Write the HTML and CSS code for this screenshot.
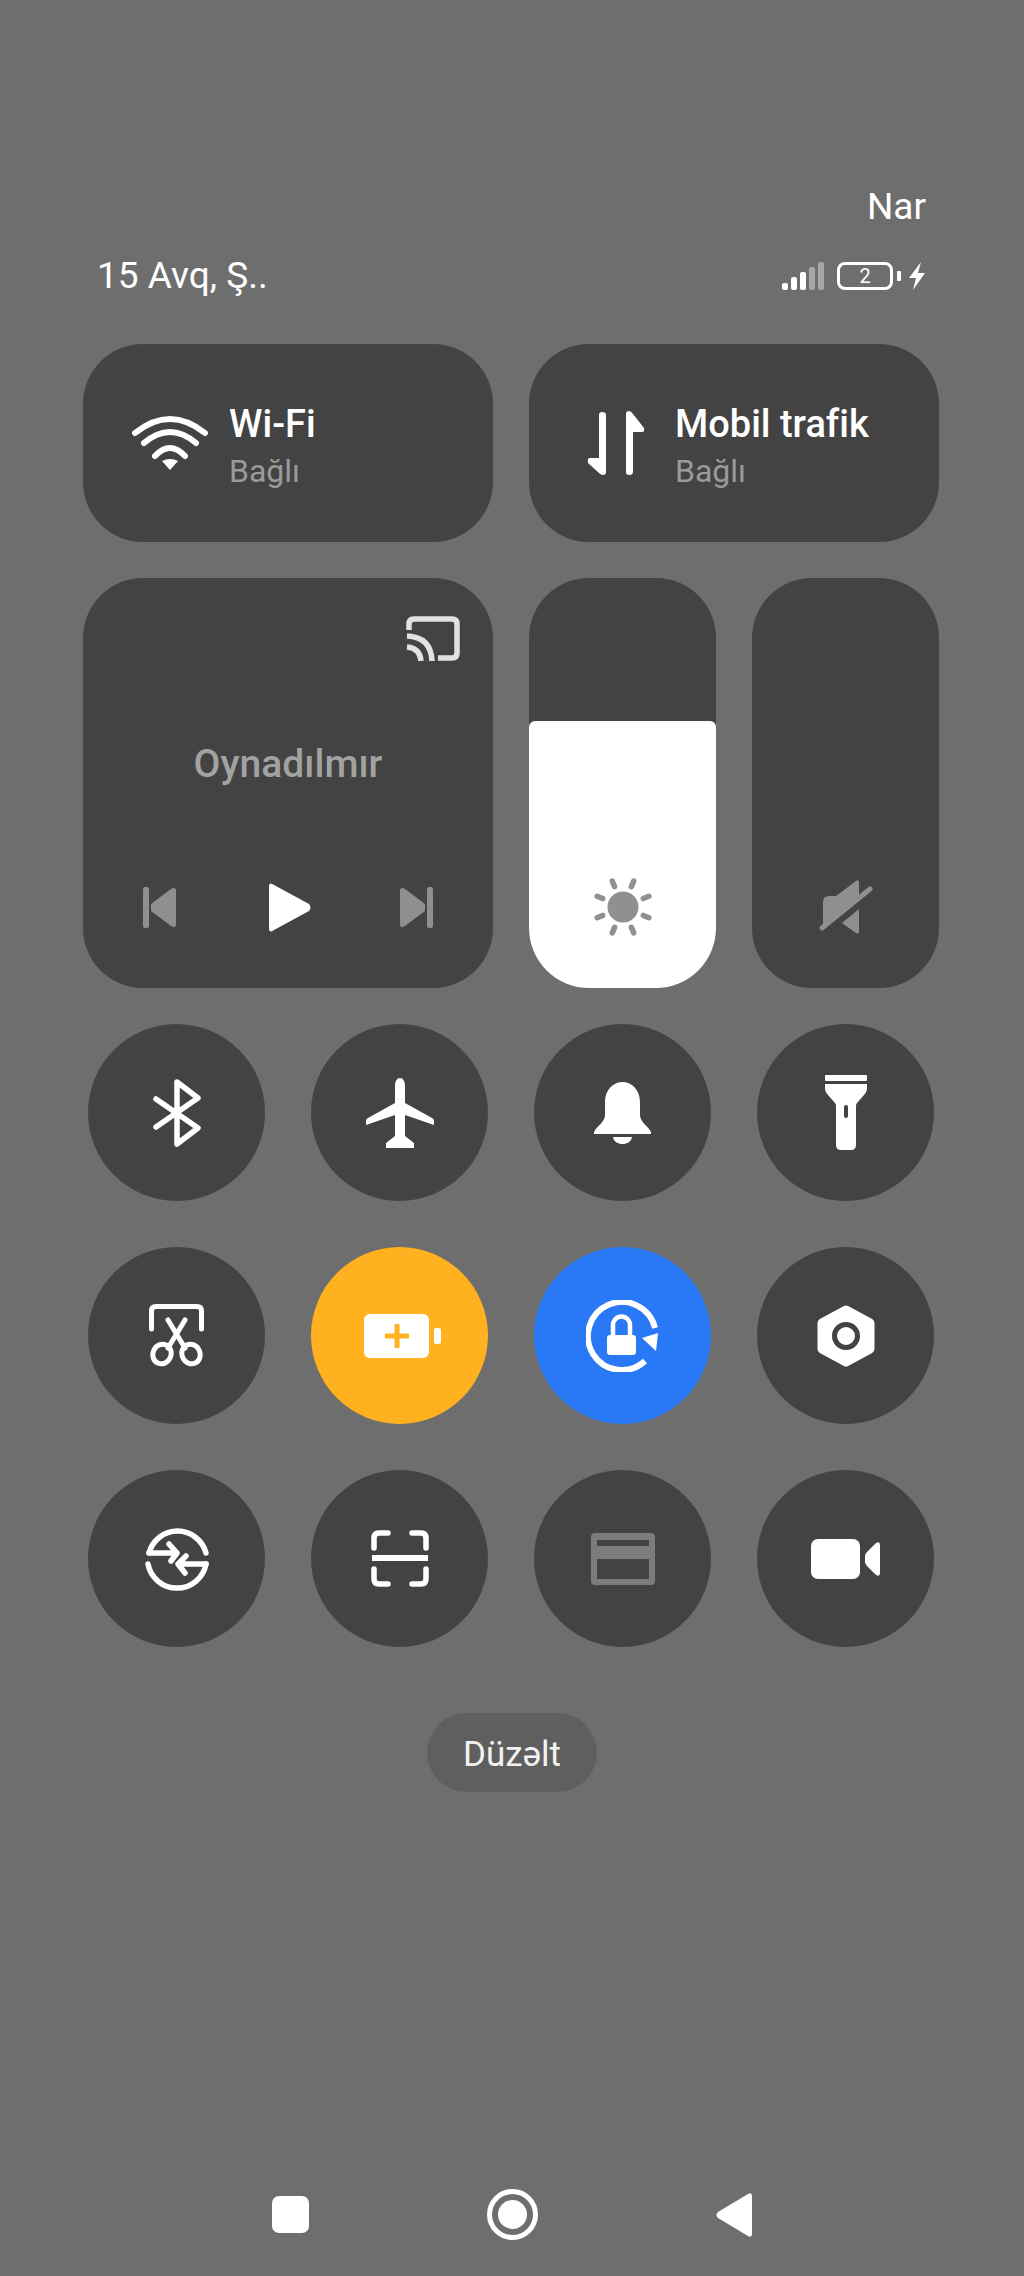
FILE: index.html
```html
<!DOCTYPE html>
<html lang="az">
<head>
<meta charset="UTF-8">
<meta name="viewport" content="width=device-width, initial-scale=1.0">
<title>Control centre</title>
<link rel="stylesheet" href="styles.css">
</head>
<body>
<div class="control-center">
    <div class="carrier">Nar</div>
    <header class="status-row">
        <span class="status-date">15 Avq, Ş..</span>
        <div class="status-icons">
            <svg width="42" height="28" viewBox="0 0 42 28">
                <rect x="0" y="21" width="6" height="7" rx="2" fill="#fff"/>
                <rect x="9" y="15" width="6" height="13" rx="2" fill="#fff"/>
                <rect x="18" y="10" width="6" height="18" rx="2" fill="#fff"/>
                <rect x="27" y="5" width="6" height="23" rx="2" fill="#a6a6a6"/>
                <rect x="36" y="0" width="6" height="28" rx="2" fill="#a6a6a6"/>
            </svg>
            <div class="battery"><span class="battery-level">2</span></div>
            <span class="battery-tip"></span>
            <svg class="bolt" width="18" height="28" viewBox="0 0 18 28">
                <path d="M13 0 L1 16 H8 L5 28 L17 11 H10 Z" fill="#fff"/>
            </svg>
        </div>
    </header>

    <section class="tile-row">
        <div class="tile tile-wide">
            <div class="tile-icon">
                <svg width="76" height="56" viewBox="0 0 76 56" fill="none" stroke="#fff" stroke-width="6" stroke-linecap="round">
                    <path d="M3 18 Q38 -10 73 18"/>
                    <path d="M12 28 Q38 6 64 28"/>
                    <path d="M23 41 Q38 25 53 41"/>
                    <path d="M30 46 Q38 42 46 46 L38 55 Z" fill="#fff" stroke="none"/>
                </svg>
            </div>
            <div class="tile-text">
                <div class="tile-title">Wi-Fi</div>
                <div class="tile-sub">Bağlı</div>
            </div>
        </div>
        <div class="tile tile-wide">
            <div class="tile-icon">
                <svg width="58" height="64" viewBox="0 0 58 64" fill="#fff">
                    <path d="M12 4 Q12 1 15 1 Q19 1 19 4 V61 Q19 64 16 64 Q14 64 12 62 L1 52 Q0 47 3 47 H12 Z"/>
                    <path d="M39 61 Q39 64 42 64 Q46 64 46 61 V21 H55 Q58 21 57 17 L46 3 Q44 0 42 0 Q39 0 39 3 Z"/>
                </svg>
            </div>
            <div class="tile-text">
                <div class="tile-title">Mobil trafik</div>
                <div class="tile-sub">Bağlı</div>
            </div>
        </div>
    </section>

    <section class="media-row">
        <div class="tile media-tile">
            <svg class="cast-icon" width="54" height="45" viewBox="0 0 54 45" fill="none" stroke="#e2e2e2" stroke-width="5.500">
                <path d="M3 14 V8 Q3 3 8 3 H46 Q51 3 51 8 V37 Q51 42 46 42 H32"/>
                <path d="M1 20 Q25 21 26 45"/>
                <path d="M1 31 Q14 32 15 45"/>
            </svg>
            <div class="media-title">Oynadılmır</div>
            <div class="media-controls">
                <svg width="33" height="41" viewBox="0 0 33 41" fill="#8f8f8f">
                    <rect x="0" y="0" width="6" height="41" rx="2"/>
                    <path d="M8 17 L28 2 Q33 -1 33 4 V37 Q33 42 28 39 L8 24 Z"/>
                </svg>
                <svg class="play-icon" width="42" height="49" viewBox="0 0 42 49" fill="#fff">
                    <path d="M0 4 Q0 -2 5 2 L40 21 Q43 24.500 40 28 L5 47 Q0 51 0 45 Z"/>
                </svg>
                <svg width="33" height="41" viewBox="0 0 33 41" fill="#8f8f8f">
                    <rect x="27" y="0" width="6" height="41" rx="2"/>
                    <path d="M25 17 L5 2 Q0 -1 0 4 V37 Q0 42 5 39 L25 24 Z"/>
                </svg>
            </div>
        </div>
        <div class="tile slider-tile">
            <div class="slider-fill">
                <svg width="60" height="60" viewBox="0 0 60 60" fill="#909090" stroke="#909090" stroke-width="5.500" stroke-linecap="round">
                    <circle cx="30" cy="30" r="15.500" stroke="none"/>
                    <line x1="30" y1="2" x2="30" y2="8" transform="rotate(22.500 30 30)"/>
                    <line x1="30" y1="2" x2="30" y2="8" transform="rotate(67.500 30 30)"/>
                    <line x1="30" y1="2" x2="30" y2="8" transform="rotate(112.500 30 30)"/>
                    <line x1="30" y1="2" x2="30" y2="8" transform="rotate(157.500 30 30)"/>
                    <line x1="30" y1="2" x2="30" y2="8" transform="rotate(202.500 30 30)"/>
                    <line x1="30" y1="2" x2="30" y2="8" transform="rotate(247.500 30 30)"/>
                    <line x1="30" y1="2" x2="30" y2="8" transform="rotate(292.500 30 30)"/>
                    <line x1="30" y1="2" x2="30" y2="8" transform="rotate(337.500 30 30)"/>
                </svg>
            </div>
        </div>
        <div class="tile slider-tile slider-empty">
            <svg width="54" height="54" viewBox="0 0 54 54" fill="#8f8f8f">
                <path d="M4 22 Q4 16 10 16 H17 L37 1 Q40 -1 40 3 V18 L4 47 Z"/>
                <path d="M23 43 L40 29 V52 Q39 55 37 53 Z"/>
                <line x1="3" y1="48" x2="51" y2="9" stroke="#8f8f8f" stroke-width="5" stroke-linecap="round"/>
            </svg>
        </div>
    </section>

    <section class="toggle-grid">
        <div class="toggle">
            <svg width="48" height="68" viewBox="0 0 48 68" fill="none" stroke="#fff" stroke-width="5.500" stroke-linecap="round" stroke-linejoin="round">
                <path d="M3 20 L45 49 L24 65 V3 L45 19 L3 48"/>
            </svg>
        </div>
        <div class="toggle">
            <svg width="68" height="70" viewBox="0 0 68 70" fill="#fff">
                <path d="M34 0 C37 0 39 3 39 8 V25 L66 40 Q68 41 68 43 V47 L39 37 V58 L48 65 V70 H20 V65 L29 58 V37 L0 47 V43 Q0 41 2 40 L29 25 V8 C29 3 31 0 34 0 Z"/>
            </svg>
        </div>
        <div class="toggle">
            <svg width="57" height="62" viewBox="0 0 57 62" fill="#fff">
                <path d="M28.500 0 C38 0 46 8 46 20 V33 C46 40 54 44 57 50 V52 H0 V50 C3 44 11 40 11 33 V20 C11 8 19 0 28.500 0 Z"/>
                <path d="M19 55 H38 C37 60 33 62 28.500 62 C24 62 20 60 19 55 Z"/>
            </svg>
        </div>
        <div class="toggle">
            <svg width="42" height="75" viewBox="0 0 42 75" fill="#fff">
                <rect x="0" y="0" width="42" height="6" rx="1"/>
                <path d="M0 9 H42 V14 Q42 17 39 20 L32 28 Q31 29 31 31 V70 Q31 75 26 75 H16 Q11 75 11 70 V31 Q11 29 10 28 L3 20 Q0 17 0 14 Z"/>
                <rect x="19" y="30" width="4" height="13" rx="2" fill="#434343"/>
            </svg>
        </div>

        <div class="toggle">
            <svg width="55" height="63" viewBox="0 0 55 63" fill="none" stroke="#fff" stroke-width="5" stroke-linecap="round">
                <path d="M2.500 25 V7 Q2.500 2.500 7 2.500 H48 Q52.500 2.500 52.500 7 V25"/>
                <path d="M19 16 L36 44"/>
                <path d="M36 16 L19 44"/>
                <ellipse cx="13" cy="50" rx="9" ry="10" transform="rotate(25 13 50)"/>
                <ellipse cx="42" cy="50" rx="9" ry="10" transform="rotate(-25 42 50)"/>
            </svg>
        </div>
        <div class="toggle toggle-saver">
            <svg class="saver-icon" width="77" height="44" viewBox="0 0 77 44">
                <rect x="0" y="0" width="65" height="44" rx="6" fill="#fff"/>
                <rect x="70" y="14" width="7" height="16" rx="2" fill="#fff"/>
                <path d="M33 10 V34 M21 22 H45" stroke="#ffb120" stroke-width="5"/>
            </svg>
        </div>
        <div class="toggle toggle-rotate">
            <svg width="73" height="72" viewBox="0 0 73 72" fill="none">
                <path d="M59 61 A34 34 0 1 1 69 28" stroke="#fff" stroke-width="6"/>
                <path d="M56 38 L72 33 L70 51 Z" fill="#fff"/>
                <path d="M27 35 V25 A8.500 8.500 0 0 1 44 25 V35" stroke="#fff" stroke-width="4.500"/>
                <rect x="21" y="35" width="29" height="20" rx="3" fill="#fff"/>
            </svg>
        </div>
        <div class="toggle">
            <svg width="58" height="62" viewBox="0 0 58 62">
                <path d="M29 5 L53 18 V44 L29 57 L5 44 V18 Z" fill="#fff" stroke="#fff" stroke-width="9" stroke-linejoin="round"/>
                <circle cx="29" cy="31" r="11.500" fill="#fff" stroke="#434343" stroke-width="5"/>
            </svg>
        </div>

        <div class="toggle">
            <svg width="64" height="65" viewBox="0 0 64 65" fill="none" stroke="#fff" stroke-width="5.500" stroke-linecap="round" stroke-linejoin="round">
                <path d="M4 27 A29.500 29.500 0 0 1 61 27"/>
                <path d="M3 38 A29.500 29.500 0 0 0 61 38"/>
                <path d="M4 27 H32 M24 18 L32 27 L26 35"/>
                <path d="M61 38 H33 M41 30 L33 38 L40 47"/>
            </svg>
        </div>
        <div class="toggle">
            <svg width="58" height="57" viewBox="0 0 58 57" fill="none" stroke="#fff" stroke-width="5.500" stroke-linecap="round">
                <path d="M3 18 V8 Q3 3 8 3 H17"/>
                <path d="M41 3 H50 Q55 3 55 8 V18"/>
                <path d="M3 39 V49 Q3 54 8 54 H17"/>
                <path d="M41 54 H50 Q55 54 55 49 V39"/>
                <path d="M1 28 H57" stroke-width="6" stroke-linecap="butt"/>
            </svg>
        </div>
        <div class="toggle">
            <svg width="64" height="52" viewBox="0 0 64 52">
                <rect x="0" y="0" width="64" height="52" rx="4" fill="#7c7c7c"/>
                <rect x="6" y="7" width="52" height="6" fill="#434343"/>
                <rect x="6" y="26" width="52" height="20" fill="#434343"/>
            </svg>
        </div>
        <div class="toggle">
            <svg width="69" height="40" viewBox="0 0 69 40" fill="#fff">
                <rect x="0" y="0" width="49" height="40" rx="7"/>
                <path d="M54 17 Q54 15 56 13 L65 4 Q69 2 69 6 V34 Q69 38 65 36 L56 27 Q54 25 54 23 Z"/>
            </svg>
        </div>
    </section>

    <div class="edit-wrap">
        <button class="edit-btn">Düzəlt</button>
    </div>

    <nav class="nav-bar">
        <span class="nav-square"></span>
        <span class="nav-home"><span class="nav-home-dot"></span></span>
        <svg width="36" height="44" viewBox="0 0 36 44" fill="#fff">
            <path d="M32 1 Q36 -1 36 3 V41 Q36 45 32 43 L2 25 Q-1 22 2 19 Z"/>
        </svg>
    </nav>
</div>
</body>
</html>
```

FILE: styles.css
```css
:root {
    --background-color: #6e6e6e;
    --tile-color: #434343;
    --muted-color: #9a9a9a;
}
* {
    box-sizing: border-box;
}
body {
    margin: 0;
    padding: 0;
    background-color: var(--background-color);
    color: #fff;
    font-family: Roboto, sans-serif;
}
.control-center {
    width: 1024px;
    height: 2276px;
    padding-top: 186px;
    overflow: hidden;
}
.carrier {
    padding-right: 98px;
    font-size: 37px;
    line-height: 42px;
    text-align: right;
}
.status-row {
    display: flex;
    justify-content: space-between;
    align-items: center;
    height: 42px;
    margin-top: 27px;
    padding: 0 98px 0 97px;
}
.status-date {
    font-size: 37px;
    line-height: 42px;
}
.status-icons {
    display: flex;
    align-items: center;
}
.battery {
    display: flex;
    justify-content: center;
    align-items: center;
    width: 56px;
    height: 28px;
    margin-left: 13px;
    border: 3px solid #fff;
    border-radius: 8px;
}
.battery-level {
    font-size: 20px;
    line-height: 22px;
}
.battery-tip {
    width: 4px;
    height: 10px;
    margin-left: 4px;
    background-color: #fff;
    border-radius: 1px;
}
.bolt {
    margin-left: 7px;
}
.tile {
    background-color: var(--tile-color);
    border-radius: 60px;
}
.tile-row {
    display: grid;
    grid-template-columns: 410px 410px;
    gap: 36px;
    margin-top: 47px;
    padding-left: 83px;
}
.tile-wide {
    display: flex;
    align-items: center;
    height: 198px;
    padding-left: 27px;
}
.tile-icon {
    display: flex;
    justify-content: center;
    width: 119px;
}
.tile-text {
    padding-top: 6px;
}
.tile-title {
    font-size: 38px;
    font-weight: 500;
    line-height: 46px;
}
.tile-sub {
    margin-top: 4px;
    color: var(--muted-color);
    font-size: 32px;
    line-height: 40px;
}
.media-row {
    display: grid;
    grid-template-columns: 410px 187px 187px;
    gap: 36px;
    height: 410px;
    margin-top: 36px;
    padding-left: 83px;
}
.media-tile {
    display: flex;
    flex-direction: column;
    padding: 38px 33px 0 60px;
}
.cast-icon {
    align-self: flex-end;
}
.media-title {
    margin-top: 80px;
    margin-left: -27px;
    color: #a2a2a2;
    font-size: 39px;
    font-weight: 500;
    line-height: 46px;
    text-align: center;
}
.media-controls {
    display: flex;
    justify-content: space-between;
    align-items: center;
    height: 49px;
    margin-top: 96px;
    margin-right: 27px;
}
.play-icon {
    margin-left: 4px;
}
.slider-tile {
    display: flex;
    flex-direction: column;
    justify-content: flex-end;
    overflow: hidden;
}
.slider-fill {
    display: flex;
    justify-content: center;
    align-items: flex-end;
    height: 267px;
    padding-bottom: 51px;
    background-color: #fff;
    border-radius: 6px 6px 0 0;
}
.slider-empty {
    align-items: center;
    padding-bottom: 54px;
}
.toggle-grid {
    display: grid;
    grid-template-columns: repeat(4, 177px);
    grid-auto-rows: 177px;
    gap: 46px;
    margin-top: 36px;
    padding-left: 88px;
}
.toggle {
    display: flex;
    justify-content: center;
    align-items: center;
    background-color: var(--tile-color);
    border-radius: 50%;
}
.toggle-saver {
    background-color: #ffb120;
}
.toggle-rotate {
    background-color: #2979f6;
}
.saver-icon {
    margin-left: 6px;
}
.edit-wrap {
    display: flex;
    justify-content: center;
    margin-top: 66px;
}
.edit-btn {
    width: 170px;
    height: 79px;
    padding: 3px 0 0;
    border: none;
    border-radius: 40px;
    background-color: #5f5f5f;
    color: #f2f2f2;
    font-family: Roboto, sans-serif;
    font-size: 35px;
}
.nav-bar {
    display: grid;
    grid-template-columns: repeat(3, 222px);
    justify-content: center;
    justify-items: center;
    align-items: center;
    height: 51px;
    margin-top: 397px;
}
.nav-square {
    width: 37px;
    height: 37px;
    background-color: #fff;
    border-radius: 7px;
}
.nav-home {
    display: flex;
    justify-content: center;
    align-items: center;
    width: 51px;
    height: 51px;
    border: 5px solid #fff;
    border-radius: 50%;
}
.nav-home-dot {
    width: 29px;
    height: 29px;
    background-color: #fff;
    border-radius: 50%;
}
```
